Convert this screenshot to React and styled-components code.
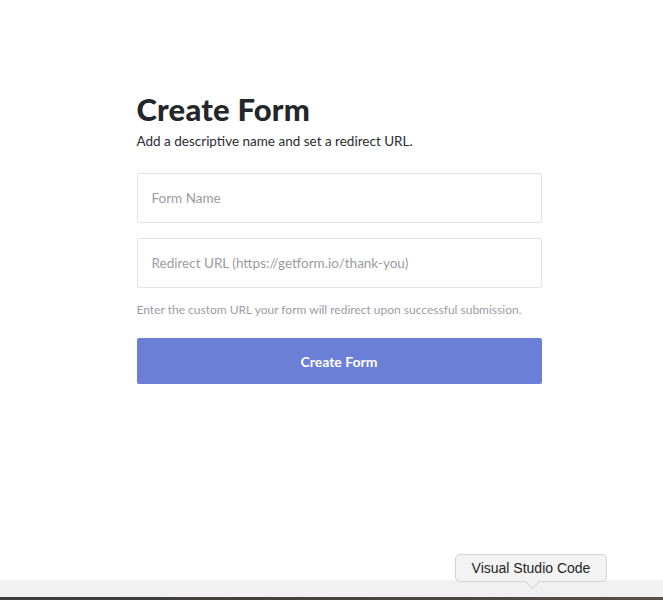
import React from 'react';
import styled, { createGlobalStyle } from 'styled-components';

const GlobalStyle = createGlobalStyle`
    html, body {
        margin: 0;
        padding: 0;
        background: #ffffff;
    }
    * {
        box-sizing: border-box;
    }
`;

function App() {
    return (
        <>
            <GlobalStyle />
            <Page>
                <Main>
                    <FormBox>
                        <Title>Create Form</Title>
                        <Subtitle>Add a descriptive name and set a redirect URL.</Subtitle>
                        <Input placeholder="Form Name" />
                        <Input placeholder="Redirect URL (https://getform.io/thank-you)" $gap={15} />
                        <Hint>Enter the custom URL your form will redirect upon successful submission.</Hint>
                        <SubmitButton>Create Form</SubmitButton>
                    </FormBox>
                </Main>
                <Dock>
                    <Tooltip>Visual Studio Code</Tooltip>
                </Dock>
                <DockEdge />
            </Page>
        </>
    );
}

const Page = styled.div`
    display: flex;
    flex-direction: column;
    width: 100%;
    height: 600px;
    font-family: Lato, 'Open Sans', sans-serif;
`;

const Main = styled.div`
    flex: 1;
    display: flex;
    justify-content: center;
    padding-top: 92px;
    padding-left: 15px;
`;

const FormBox = styled.form`
    display: flex;
    flex-direction: column;
    width: 405px;
`;

const Title = styled.h1`
    margin: 0;
    font-size: 31px;
    line-height: 34px;
    font-weight: 900;
    color: #24272a;
    letter-spacing: 0.2px;
`;

const Subtitle = styled.p`
    margin: 6px 0 0;
    font-size: 13.5px;
    line-height: 18px;
    color: #2a2d30;
`;

const Input = styled.input`
    margin-top: ${(p) => p.$gap || 23}px;
    width: 100%;
    height: 50px;
    padding: 0 14px;
    border: 1px solid #e3e3e3;
    border-radius: 2px;
    font-family: inherit;
    font-size: 13.5px;
    color: #333;
    outline: none;

    &::placeholder {
        color: #9a9ca3;
    }
`;

const Hint = styled.p`
    margin: 14px 0 0;
    font-size: 12px;
    line-height: 16px;
    color: #9b9da4;
`;

const SubmitButton = styled.button`
    margin-top: 20px;
    width: 100%;
    height: 46px;
    border: none;
    border-radius: 2px;
    background-color: #6b7fd7;
    color: #ffffff;
    font-family: inherit;
    font-size: 14px;
    font-weight: 700;
    cursor: pointer;
`;

const Dock = styled.div`
    position: relative;
    height: 17px;
    background-color: #f1f1f1;
`;

const DockEdge = styled.div`
    height: 3px;
    background: linear-gradient(90deg, #3b3a39, #4a4643 70%, #5a4f48);
`;

const Tooltip = styled.div`
    position: absolute;
    left: 455px;
    bottom: 15px;
    width: 152px;
    height: 28px;
    display: flex;
    align-items: center;
    justify-content: center;
    background: #f3f3f3;
    border: 1px solid #d4d4d4;
    border-radius: 5px;
    font-family: 'Liberation Sans', Arial, sans-serif;
    font-size: 14px;
    color: #262626;

    &::after {
        content: '';
        position: absolute;
        left: 71px;
        bottom: -6px;
        width: 10px;
        height: 10px;
        background: #f2f2f2;
        border-right: 1px solid #d4d4d4;
        border-bottom: 1px solid #d4d4d4;
        transform: rotate(45deg);
    }
`;

export default App;
